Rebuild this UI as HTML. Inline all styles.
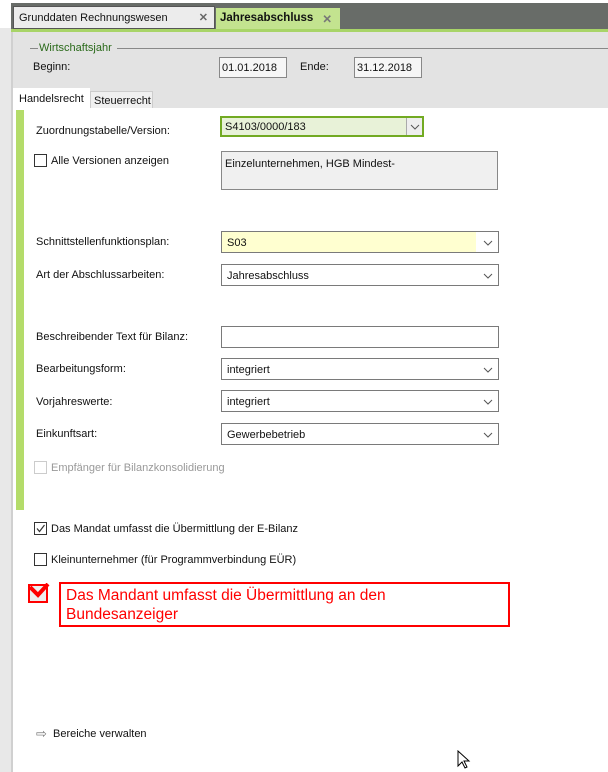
<!DOCTYPE html>
<html><head><meta charset="utf-8"><style>
*{box-sizing:border-box;margin:0;padding:0}
body{width:608px;height:772px;position:relative;overflow:hidden;background:#fff;font-family:"Liberation Sans",sans-serif;font-size:11px;color:#111}
.a{position:absolute}
.sel{position:absolute;left:221px;width:278px;height:22px;border:1px solid #7a7a7a;background:#fff;padding:5px 5px 0;font-size:11px}
.sel svg{position:absolute;right:5px;top:8px}
.lbl{position:absolute;left:36px}
.cb{position:absolute;left:34px;width:13px;height:13px;border:1px solid #333;background:#fff}
</style></head><body>
<div class="a" style="left:0;top:0;width:11px;height:772px;background:#e8e8e8"></div>
<div class="a" style="left:0;top:0;width:11px;height:28px;background:#fff"></div>
<div class="a" style="left:11px;top:0;width:2px;height:772px;background:#d0d0d0"></div>
<div class="a" style="left:11px;top:0;width:597px;height:3px;background:#fff"></div>
<div class="a" style="left:11px;top:3px;width:597px;height:26px;background:#686c68"></div>
<div class="a" style="left:13px;top:6px;width:202px;height:23px;background:#ececec;border:1px solid #555;padding:5px 5px;font-size:11px">Grunddaten Rechnungswesen<span style="position:absolute;right:6px;top:4px;color:#666;font-weight:bold">✕</span></div>
<div class="a" style="left:216px;top:8px;width:124px;height:23px;background:#c3e38f;padding:4px 4px;font-weight:bold;font-size:11.5px">Jahresabschluss<span style="position:absolute;right:8px;top:4px;color:#777">✕</span></div>
<div class="a" style="left:11px;top:29px;width:597px;height:3px;background:#a8d468"></div>
<div class="a" style="left:13px;top:32px;width:595px;height:76px;background:#e3e3e3"></div>
<div class="a" style="left:30px;top:48px;width:8px;height:1px;background:#888"></div>
<div class="a" style="left:39px;top:42px;color:#2a6a1a">Wirtschaftsjahr</div>
<div class="a" style="left:117px;top:48px;width:491px;height:1px;background:#888"></div>
<div class="a" style="left:33px;top:61px">Beginn:</div>
<div class="a" style="left:219px;top:57px;width:68px;height:21px;border:1px solid #888;background:#f6f6f6;padding:4px 2px">01.01.2018</div>
<div class="a" style="left:300px;top:61px">Ende:</div>
<div class="a" style="left:354px;top:57px;width:68px;height:21px;border:1px solid #888;background:#f6f6f6;padding:4px 2px">31.12.2018</div>
<div class="a" style="left:13px;top:88px;width:77px;height:22px;background:#fff;padding:5px 6px">Handelsrecht</div>
<div class="a" style="left:90px;top:91px;width:63px;height:17px;background:#f0f0f0;border:1px solid #ccc;border-bottom:0;padding:3px 3px">Steuerrecht</div>
<div class="a" style="left:16px;top:110px;width:8px;height:400px;background:#b4dc6a"></div>

<div class="lbl" style="top:125px">Zuordnungstabelle/Version:</div>
<div class="a" style="left:220px;top:116px;width:204px;height:21px;border:2px solid #72aa22;background:#e8f2d8;padding:3px 3px">S4103/0000/183<div style="position:absolute;right:0;top:0;width:16px;height:17px;border-left:1px solid #aaa;background:#eee"><svg width="10" height="6" style="position:absolute;left:3px;top:6px"><path d="M1 1l4 4 4-4" stroke="#555" fill="none"/></svg></div></div>
<div class="cb" style="top:154px"></div><div class="a" style="left:51px;top:155px">Alle Versionen anzeigen</div>
<div class="a" style="left:221px;top:151px;width:277px;height:39px;border:1px solid #888;background:#f0f0f0;padding:6px 3px">Einzelunternehmen, HGB Mindest-</div>

<div class="lbl" style="top:236px">Schnittstellenfunktionsplan:</div>
<div class="sel" style="top:231px;background:linear-gradient(90deg,#ffffd0 0,#ffffd0 92%,#fff 92%)">S03<svg width="10" height="6"><path d="M1 1l4 4 4-4" stroke="#555" fill="none"/></svg></div>
<div class="lbl" style="top:269px">Art der Abschlussarbeiten:</div>
<div class="sel" style="top:264px">Jahresabschluss<svg width="10" height="6"><path d="M1 1l4 4 4-4" stroke="#555" fill="none"/></svg></div>
<div class="lbl" style="top:331px">Beschreibender Text für Bilanz:</div>
<div class="sel" style="top:326px"></div>
<div class="lbl" style="top:363px">Bearbeitungsform:</div>
<div class="sel" style="top:358px">integriert<svg width="10" height="6"><path d="M1 1l4 4 4-4" stroke="#555" fill="none"/></svg></div>
<div class="lbl" style="top:396px">Vorjahreswerte:</div>
<div class="sel" style="top:390px">integriert<svg width="10" height="6"><path d="M1 1l4 4 4-4" stroke="#555" fill="none"/></svg></div>
<div class="lbl" style="top:428px">Einkunftsart:</div>
<div class="sel" style="top:423px">Gewerbebetrieb<svg width="10" height="6"><path d="M1 1l4 4 4-4" stroke="#555" fill="none"/></svg></div>
<div class="cb" style="top:461px;border-color:#ccc"></div><div class="a" style="left:51px;top:462px;color:#999">Empfänger für Bilanzkonsolidierung</div>

<div class="cb" style="top:522px"><svg width="11" height="11" style="position:absolute;left:0;top:0"><path d="M2 5.5l2.5 3L9.5 2" stroke="#333" fill="none" stroke-width="1.2"/></svg></div>
<div class="a" style="left:51px;top:523px">Das Mandat umfasst die Übermittlung der E-Bilanz</div>
<div class="cb" style="top:553px"></div><div class="a" style="left:51px;top:554px">Kleinunternehmer (für Programmverbindung EÜR)</div>

<div class="a" style="left:28px;top:584px;width:20px;height:19px;border:2px solid #f00;background:#eee"></div>
<svg class="a" style="left:28px;top:583px" width="22" height="18"><path d="M2 4l8 8 10-11" stroke="#f00" stroke-width="4" fill="none"/></svg>
<div class="a" style="left:59px;top:582px;width:451px;height:45px;border:2px solid #f00;color:#f00;font-size:15.5px;line-height:19px;padding:2px 5px">Das Mandant umfasst die Übermittlung an den<br>Bundesanzeiger</div>

<div class="a" style="left:36px;top:726px;color:#777;font-size:13px">⇨</div>
<div class="a" style="left:53px;top:728px">Bereiche verwalten</div>
<svg class="a" style="left:457px;top:750px" width="14" height="20"><path d="M1 1v15l4-4 3 6 2-1-3-6h5z" fill="#fff" stroke="#000"/></svg>
</body></html>
